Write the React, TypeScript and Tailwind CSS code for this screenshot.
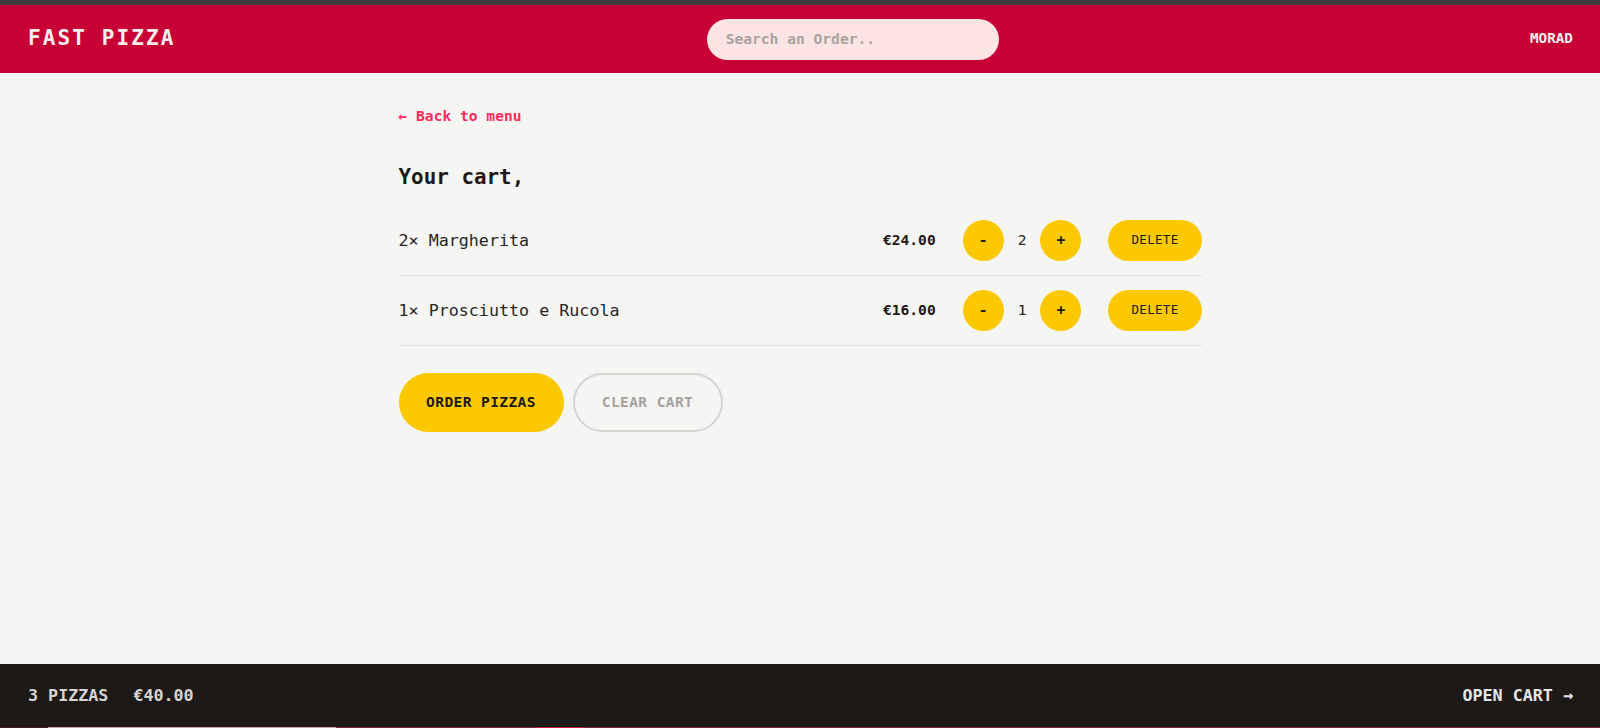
import React from "react";

const mono = { fontFamily: '"DejaVu Sans Mono", "Liberation Mono", monospace' };

type Item = { qty: number; name: string; price: string };

const items: Item[] = [
  { qty: 2, name: "Margherita", price: "€24.00" },
  { qty: 1, name: "Prosciutto e Rucola", price: "€16.00" },
];

function RoundBtn({ label }: { label: string }) {
  return (
    <button className="flex h-[41px] w-[41px] items-center justify-center rounded-full bg-[#fcc800] text-[14.6px] font-bold text-[#1c1917]">
      {label}
    </button>
  );
}

export default function App() {
  return (
    <div
      className="flex h-screen flex-col overflow-hidden bg-[#f5f5f3] text-[#1c1917]"
      style={mono}
    >
      <div className="h-[5px] shrink-0 bg-[#3c3c3c]" />
      <header className="flex h-[68px] shrink-0 items-center justify-between bg-[#c70036] pl-[28px] pr-[27px]">
        <div className="text-[21px] font-semibold uppercase tracking-[0.1em] text-[#f5efe9]">
          Fast Pizza
        </div>
        <div className="flex h-[41px] w-[292px] items-center rounded-full bg-[#fde4e4] pl-[19px] text-[14.6px] font-bold text-[#a8a29e]">
          Search an Order..
        </div>
        <div className="text-[14.3px] font-bold uppercase text-[#f5efe9]">Morad</div>
      </header>

      <main className="flex-1 overflow-hidden">
        <div className="mx-auto w-[803px] pt-[33px]">
          <a className="block text-[14.6px] font-semibold leading-[20.4px] text-[#fb2c5a]">
            ← Back to menu
          </a>
          <h2 className="mt-[37px] text-[20.9px] font-semibold leading-[29.3px] text-[#1c1917]">
            Your cart,
          </h2>
          <ul className="mt-[13px]">
            {items.map((it) => (
              <li
                key={it.name}
                className="flex items-center justify-between border-b border-[#e4e2df] py-[14px]"
              >
                <p className="text-[16.7px] leading-[25px] text-[#292524]">
                  {it.qty}× {it.name}
                </p>
                <div className="flex items-center gap-[27px]">
                  <p className="text-[14.6px] font-bold text-[#1c1917]">{it.price}</p>
                  <div className="flex items-center gap-[14px]">
                    <RoundBtn label="-" />
                    <span className="text-[14.6px] font-medium text-[#292524]">{it.qty}</span>
                    <RoundBtn label="+" />
                  </div>
                  <button className="flex h-[41px] items-center rounded-full bg-[#fcc800] px-[23px] text-[12.5px] font-medium uppercase tracking-[0.025em] text-[#1c1917]">
                    Delete
                  </button>
                </div>
              </li>
            ))}
          </ul>
          <div className="mt-[27px] flex items-center gap-[9px]">
            <button className="flex h-[59px] w-[165px] items-center justify-center rounded-full bg-[#fcc800] text-[14.6px] font-bold uppercase tracking-[0.025em] text-[#1c1917]">
              Order pizzas
            </button>
            <button className="flex h-[59px] w-[150px] items-center justify-center rounded-full border-2 border-[#d6d3d1] text-[14.6px] font-bold uppercase tracking-[0.025em] text-[#a8a29e]">
              Clear cart
            </button>
          </div>
        </div>
      </main>

      <footer className="flex h-[63px] shrink-0 items-center justify-between bg-[#1c1917] pl-[28px] pr-[27px] text-[16.7px] uppercase">
        <p className="flex gap-[25px] font-semibold text-[#d6d3d1]">
          <span>3 pizzas</span>
          <span>€40.00</span>
        </p>
        <a className="font-semibold text-[#e7e5e4]">Open cart →</a>
      </footer>
      <div className="flex h-px shrink-0 bg-[#6b2330]">
        <div className="w-[48px] bg-[#4a1a22]" />
        <div className="w-[288px] bg-[#c9a3a8]" />
        <div className="w-[200px] bg-[#7a2a38]" />
        <div className="w-[48px] bg-[#b8203c]" />
        <div className="flex-1 bg-[#7a2a38]" />
      </div>
    </div>
  );
}
